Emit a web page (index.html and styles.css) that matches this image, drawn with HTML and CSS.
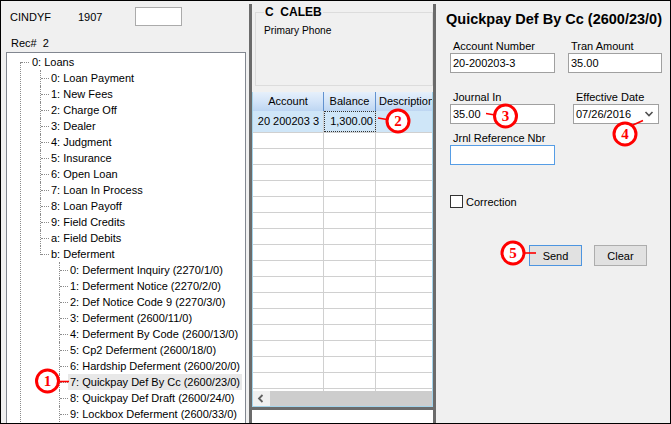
FILE: index.html
```html
<!DOCTYPE html>
<html>
<head>
<meta charset="utf-8">
<title>Quickpay Def By Cc</title>
<link rel="stylesheet" href="styles.css">
</head>
<body>
<div class="window">
  <section class="left">
    <div class="user-row">
      <span class="user">CINDYF</span>
      <span class="num">1907</span>
      <span class="small-input"></span>
    </div>
    <div class="rec">Rec#  2</div>
    <div class="tree-box">
      <ul class="tree">
        <li class="root"><span class="lbl">0: Loans</span>
          <ul>
            <li><span class="lbl">0: Loan Payment</span></li>
            <li><span class="lbl">1: New Fees</span></li>
            <li><span class="lbl">2: Charge Off</span></li>
            <li><span class="lbl">3: Dealer</span></li>
            <li><span class="lbl">4: Judgment</span></li>
            <li><span class="lbl">5: Insurance</span></li>
            <li><span class="lbl">6: Open Loan</span></li>
            <li><span class="lbl">7: Loan In Process</span></li>
            <li><span class="lbl">8: Loan Payoff</span></li>
            <li><span class="lbl">9: Field Credits</span></li>
            <li><span class="lbl">a: Field Debits</span></li>
            <li class="last"><span class="lbl">b: Deferment</span>
              <ul>
                <li><span class="lbl">0: Deferment Inquiry (2270/1/0)</span></li>
                <li><span class="lbl">1: Deferment Notice (2270/2/0)</span></li>
                <li><span class="lbl">2: Def Notice Code 9 (2270/3/0)</span></li>
                <li><span class="lbl">3: Deferment (2600/11/0)</span></li>
                <li><span class="lbl">4: Deferment By Code (2600/13/0)</span></li>
                <li><span class="lbl">5: Cp2 Deferment (2600/18/0)</span></li>
                <li><span class="lbl">6: Hardship Deferment (2600/20/0)</span></li>
                <li><span class="lbl selected">7: Quickpay Def By Cc (2600/23/0)</span></li>
                <li><span class="lbl">8: Quickpay Def Draft (2600/24/0)</span></li>
                <li><span class="lbl">9: Lockbox Deferment (2600/33/0)</span></li>
              </ul>
            </li>
          </ul>
        </li>
      </ul>
    </div>
  </section>

  <section class="middle">
    <div class="group">
      <div class="group-title">C  CALEB</div>
      <div class="group-sub">Primary Phone</div>
    </div>
    <div class="grid">
      <div class="grid-head">
        <div class="hc c1">Account</div>
        <div class="hc c2">Balance</div>
        <div class="hc c3">Description</div>
      </div>
      <div class="grid-row sel">
        <div class="gc c1 num-cell">20 200203 3</div>
        <div class="gc c2 num-cell focus">1,300.00</div>
        <div class="gc c3"></div>
      </div>
      <div class="grid-body">
        <div class="grid-row"><div class="gc c1"></div><div class="gc c2"></div><div class="gc c3"></div></div>
        <div class="grid-row"><div class="gc c1"></div><div class="gc c2"></div><div class="gc c3"></div></div>
        <div class="grid-row"><div class="gc c1"></div><div class="gc c2"></div><div class="gc c3"></div></div>
        <div class="grid-row"><div class="gc c1"></div><div class="gc c2"></div><div class="gc c3"></div></div>
        <div class="grid-row"><div class="gc c1"></div><div class="gc c2"></div><div class="gc c3"></div></div>
        <div class="grid-row"><div class="gc c1"></div><div class="gc c2"></div><div class="gc c3"></div></div>
        <div class="grid-row"><div class="gc c1"></div><div class="gc c2"></div><div class="gc c3"></div></div>
        <div class="grid-row"><div class="gc c1"></div><div class="gc c2"></div><div class="gc c3"></div></div>
        <div class="grid-row"><div class="gc c1"></div><div class="gc c2"></div><div class="gc c3"></div></div>
        <div class="grid-row"><div class="gc c1"></div><div class="gc c2"></div><div class="gc c3"></div></div>
        <div class="grid-row"><div class="gc c1"></div><div class="gc c2"></div><div class="gc c3"></div></div>
        <div class="grid-row"><div class="gc c1"></div><div class="gc c2"></div><div class="gc c3"></div></div>
        <div class="grid-row"><div class="gc c1"></div><div class="gc c2"></div><div class="gc c3"></div></div>
        <div class="grid-row"><div class="gc c1"></div><div class="gc c2"></div><div class="gc c3"></div></div>
        <div class="grid-row"><div class="gc c1"></div><div class="gc c2"></div><div class="gc c3"></div></div>
        <div class="grid-row"><div class="gc c1"></div><div class="gc c2"></div><div class="gc c3"></div></div>
        <div class="grid-row"><div class="gc c1"></div><div class="gc c2"></div><div class="gc c3"></div></div>
      </div>
      <div class="hscroll">
        <div class="sb-btn"><svg class="sb-arrow" viewBox="0 0 17 15" width="17" height="15"><path d="M9.5 4 L6 7.5 L9.5 11"/></svg></div>
        <div class="sb-thumb"></div>
      </div>
    </div>
    <div class="mid-sep"></div>
    <div class="mid-bottom"></div>
  </section>

  <section class="right">
    <div class="title">Quickpay Def By Cc (2600/23/0)</div>
    <div class="form">
      <div class="row r1">
        <div class="field w1"><label>Account Number</label><div class="text">20-200203-3</div></div>
        <div class="field w2"><label>Tran Amount</label><div class="text">35.00</div></div>
      </div>
      <div class="row r2">
        <div class="field w1"><label>Journal In</label><div class="text">35.00</div></div>
        <div class="field w3"><label class="lbl-date">Effective Date</label>
          <div class="text select"><span>07/26/2016</span><svg class="chev" viewBox="0 0 10 6" width="10" height="6"><path d="M1.5 1 L5 4.5 L8.5 1"/></svg></div>
        </div>
      </div>
      <div class="row r3">
        <div class="field w1"><label>Jrnl Reference Nbr</label><div class="text focus-box"></div></div>
      </div>
      <div class="check-row"><span class="checkbox"></span><span>Correction</span></div>
      <div class="buttons">
        <button class="btn default">Send</button>
        <button class="btn">Clear</button>
      </div>
    </div>
  </section>

  <svg class="callouts" viewBox="0 0 671 424" width="671" height="424">
    <g class="co-line">
      <line x1="59" y1="381.5" x2="69" y2="381.5"/>
      <line x1="378" y1="118" x2="387" y2="119.5"/>
      <line x1="486" y1="113.5" x2="495" y2="115"/>
      <line x1="633" y1="125" x2="643" y2="120.5"/>
      <line x1="524" y1="253" x2="536" y2="253"/>
    </g>
    <g class="co-ring">
      <circle cx="47.5" cy="381" r="11"/>
      <circle cx="398" cy="121" r="11"/>
      <circle cx="505.5" cy="116" r="11"/>
      <circle cx="625" cy="134" r="11"/>
      <circle cx="513" cy="253" r="11"/>
    </g>
    <g class="co-num">
      <text x="47.5" y="386">1</text>
      <text x="398" y="126">2</text>
      <text x="505.5" y="121">3</text>
      <text x="625" y="139">4</text>
      <text x="513" y="258">5</text>
    </g>
  </svg>
</div>
</body>
</html>
```

FILE: styles.css
```css
* { box-sizing: border-box; }

body {
  margin: 0;
  font-family: "Liberation Sans", Arial, sans-serif;
  font-size: 11px;
  color: #000;
}

.window {
  position: relative;
  width: 671px;
  height: 424px;
  border: 1px solid #000;
  background: #f0f0f0;
  display: flex;
  overflow: hidden;
}

/* ---------- left panel ---------- */
.left {
  width: 248px;
  flex: none;
  display: flex;
  flex-direction: column;
}

.user-row {
  display: flex;
  align-items: center;
  height: 19px;
  margin-top: 6px;
  padding-left: 9px;
}
.user { width: 68px; }
.num { width: 57px; }
.small-input {
  width: 47px;
  height: 19px;
  background: #fff;
  border: 1px solid #ababab;
}

.rec {
  margin: 11px 0 0 10px;
  line-height: 13px;
  white-space: pre;
}

.tree-box {
  flex: 1;
  margin: 2px 3px -6px 5px;
  background: #fff;
  border: 1px solid #828790;
  overflow: hidden;
}

.tree, .tree ul {
  list-style: none;
  margin: 0;
  padding: 0;
}
.tree { padding: 1px 0 0 13px; }
.tree ul { margin-left: 10px; }

.tree li {
  position: relative;
  padding-left: 9px;
}
.tree li.root { padding-left: 10px; }

.tree li::before {
  content: "";
  position: absolute;
  left: 0;
  top: 0;
  height: 100%;
  border-left: 1px dotted #8c8c8c;
}
.tree li::after {
  content: "";
  position: absolute;
  left: 1px;
  top: 8px;
  width: 8px;
  border-top: 1px dotted #8c8c8c;
}
.tree li.root::before { top: 8px; height: auto; bottom: 0; }
.tree li.last::before { height: 9px; }

.lbl {
  display: inline-block;
  height: 16px;
  line-height: 16px;
  padding: 0 2px;
  white-space: nowrap;
}
.lbl.selected { background: #e8e8e8; }

/* ---------- middle panel ---------- */
.middle {
  width: 187px;
  flex: none;
  margin-top: 3px;
  border-left: 3px solid #6b6b6b;
  border-right: 3px solid #6b6b6b;
  display: flex;
  flex-direction: column;
}

.group {
  margin: 8px 0 0 3px;
  height: 74px;
  border: 1px solid #dcdcdc;
  padding-left: 8px;
}
.group-title {
  width: fit-content;
  margin-top: -8px;
  padding: 0 1px;
  background: #f0f0f0;
  font-weight: bold;
  font-size: 12px;
  line-height: 14px;
  white-space: pre;
}
.group-sub {
  margin-top: 5px;
  font-size: 10.2px;
  line-height: 14px;
}

.grid {
  margin-top: 6px;
  height: 315px;
  flex: none;
  display: flex;
  flex-direction: column;
  background: #fff;
  border: 1px solid #a3d3ea;
  border-top: none;
  overflow: hidden;
}

.grid-head {
  display: flex;
  height: 19px;
  flex: none;
  background: linear-gradient(to bottom, #e6f0fb 0%, #d3e4f8 50%, #bdd6f2 100%);
}
.hc {
  line-height: 19px;
  text-align: center;
  white-space: nowrap;
  border-right: 1px solid #6292cf;
}
.c1 { width: 71px; flex: none; }
.c2 { width: 52px; flex: none; }
.c3 { width: 100px; flex: none; }
.grid-head .c3 { text-align: left; padding-left: 3px; }

.grid-row {
  display: flex;
  height: 16px;
  flex: none;
  border-bottom: 1px solid #d0d0d0;
}
.grid-row.sel {
  height: 22px;
  background: #cfe6f8;
}
.gc {
  border-right: 1px solid #d0d0d0;
  line-height: 21px;
  white-space: nowrap;
}
.num-cell { text-align: right; padding-right: 4px; }
.focus {
  padding-right: 2px;
  outline: 1px dotted #333;
  outline-offset: -1px;
}

.grid-body {
  flex: 1;
  overflow: hidden;
}

.hscroll {
  height: 15px;
  flex: none;
  display: flex;
}
.sb-btn {
  width: 17px;
  background: #f0f0f0;
}
.sb-arrow path {
  fill: none;
  stroke: #606060;
  stroke-width: 1.8;
}
.sb-thumb {
  flex: 1;
  background: #cdcdcd;
}

.mid-sep {
  height: 3px;
  flex: none;
  background: #6b6b6b;
}
.mid-bottom {
  flex: 1;
  background: #fff;
}

/* ---------- right panel ---------- */
.right {
  flex: 1;
  padding-top: 10px;
}

.title {
  padding-left: 10px;
  font-weight: bold;
  font-size: 14.5px;
  line-height: 17px;
  white-space: nowrap;
}

.form {
  margin-top: 12px;
  padding-left: 14px;
}

.row { display: flex; }
.r2 { margin-top: 18px; }
.r3 { margin-top: 8px; }

.field {
  display: flex;
  flex-direction: column;
}
.field label {
  line-height: 13px;
  padding-left: 3px;
  white-space: nowrap;
}
.w1 { width: 105px; }
.w2 { width: 94px; margin-left: 13px; }
.w3 { width: 86px; margin-left: 18px; }
.lbl-date { padding-left: 4px; }

.text {
  height: 20px;
  background: #fff;
  border: 1px solid #a0a0a0;
  padding-left: 2px;
  line-height: 18px;
  white-space: nowrap;
}
.select {
  display: flex;
  align-items: center;
  justify-content: space-between;
  padding-right: 4px;
}
.chev path {
  fill: none;
  stroke: #505050;
  stroke-width: 1.6;
}
.focus-box { border-color: #569de5; }

.check-row {
  margin-top: 30px;
  display: flex;
  align-items: center;
  gap: 3px;
  height: 13px;
}
.checkbox {
  width: 13px;
  height: 13px;
  border: 1px solid #333;
  background: #fff;
}

.buttons {
  margin-top: 37px;
  padding-left: 79px;
  display: flex;
  gap: 12px;
}
.btn {
  width: 53px;
  height: 21px;
  padding: 0;
  font-family: "Liberation Sans", Arial, sans-serif;
  font-size: 11px;
  color: #000;
  background: #e1e1e1;
  border: 1px solid #adadad;
}
.btn.default { border-color: #4d95e0; }

/* ---------- callouts ---------- */
.callouts {
  position: absolute;
  left: -1px;
  top: -1px;
  pointer-events: none;
}
.co-line line {
  stroke: #f00;
  stroke-width: 1.6;
}
.co-ring circle {
  fill: #fff;
  stroke: #f00;
  stroke-width: 3;
}
.co-num text {
  fill: #f00;
  font-family: "Liberation Serif", "Times New Roman", serif;
  font-weight: bold;
  font-size: 15px;
  text-anchor: middle;
}
```
